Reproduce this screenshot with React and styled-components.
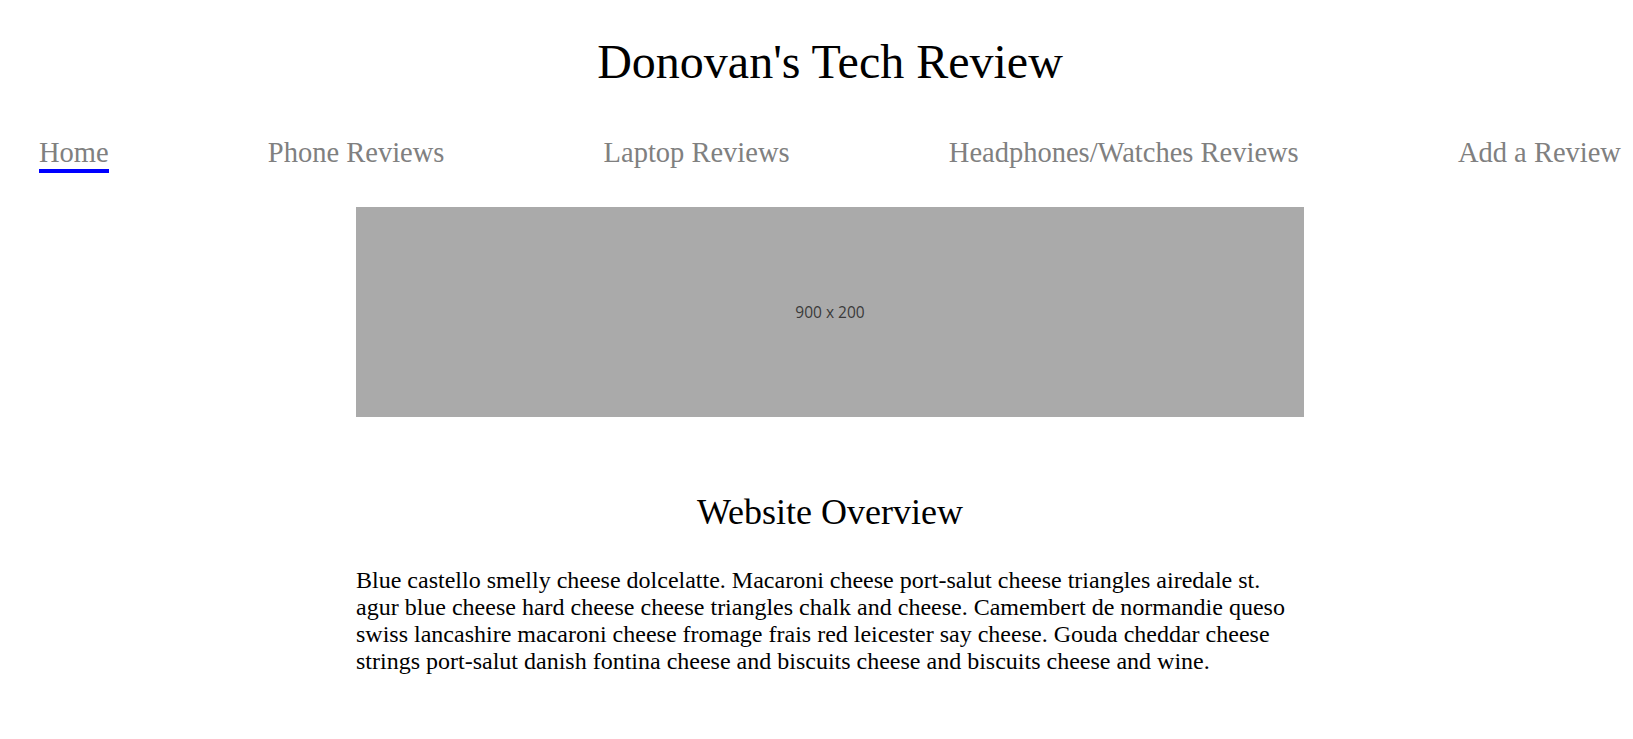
import styled, { createGlobalStyle } from "styled-components";

const GlobalStyle = createGlobalStyle`
  html, body {
    margin: 0;
    padding: 0;
    background: #ffffff;
  }
  body {
    font-family: "Liberation Serif", "Times New Roman", serif;
    color: #000000;
  }
  * {
    box-sizing: border-box;
  }
`;

const navLinks = [
  { label: "Home", active: true },
  { label: "Phone Reviews" },
  { label: "Laptop Reviews" },
  { label: "Headphones/Watches Reviews" },
  { label: "Add a Review" },
];

const overview =
  "Blue castello smelly cheese dolcelatte. Macaroni cheese port-salut cheese triangles airedale st. agur blue cheese hard cheese cheese triangles chalk and cheese. Camembert de normandie queso swiss lancashire macaroni cheese fromage frais red leicester say cheese. Gouda cheddar cheese strings port-salut danish fontina cheese and biscuits cheese and biscuits cheese and wine.";

export default function App() {
  return (
    <>
      <GlobalStyle />
      <Page>
        <Header>
          <SiteTitle>Donovan's Tech Review</SiteTitle>
        </Header>
        <NavBar>
          {navLinks.map((link) => (
            <NavLink key={link.label} href="#" $active={link.active}>
              {link.label}
            </NavLink>
          ))}
        </NavBar>
        <Main>
          <Banner>
            <BannerLabel>900 x 200</BannerLabel>
          </Banner>
          <SectionTitle>Website Overview</SectionTitle>
          <Overview>{overview}</Overview>
        </Main>
      </Page>
    </>
  );
}

const Page = styled.div`
  display: flex;
  flex-direction: column;
  width: 100%;
`;

const Header = styled.header`
  padding-left: 27px;
  padding-top: 34px;
`;

const SiteTitle = styled.h1`
  margin: 0;
  text-align: center;
  font-size: 48px;
  line-height: 55px;
  font-weight: normal;
`;

const NavBar = styled.nav`
  display: flex;
  justify-content: space-between;
  align-items: flex-start;
  margin-top: 47px;
  padding: 0 12px 0 39px;
`;

const NavLink = styled.a`
  display: inline-block;
  font-size: 28.5px;
  line-height: 33px;
  color: #808080;
  text-decoration: none;
  border-bottom: 4px solid ${({ $active }) => ($active ? "#0000ff" : "transparent")};
`;

const Main = styled.main`
  padding-left: 27px;
  display: flex;
  flex-direction: column;
  align-items: center;
`;

const Banner = styled.div`
  width: 948px;
  height: 210px;
  margin-top: 34px;
  background: #aaaaaa;
  display: flex;
  align-items: center;
  justify-content: center;
`;

const BannerLabel = styled.span`
  font-family: "Open Sans", "Noto Sans", sans-serif;
  font-size: 15.5px;
  color: #3a3a3a;
`;

const SectionTitle = styled.h2`
  margin: 75px 0 0;
  font-size: 36px;
  line-height: 41px;
  font-weight: normal;
  text-align: center;
`;

const Overview = styled.p`
  width: 948px;
  margin: 34px 0 0;
  font-size: 24px;
  line-height: 27px;
`;
